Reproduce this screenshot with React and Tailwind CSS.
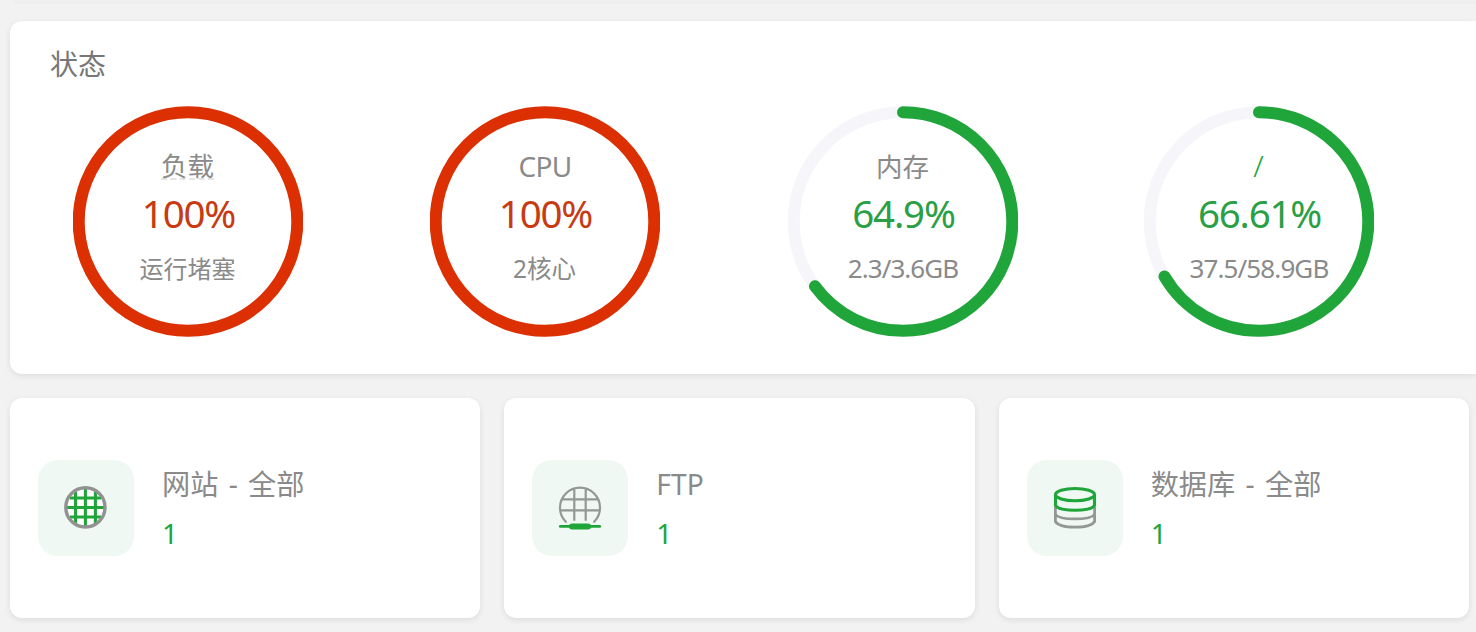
const GAUGES = [
  { id: 'load', label: '负载', value: '100%', percent: 100, note: '运行堵塞', underline: true, labelClass: 'text-[26.5px]', noteClass: 'text-2xl' },
  { id: 'cpu', label: 'CPU', value: '100%', percent: 100, note: '2核心', labelClass: 'text-[28px] tracking-[-0.7px] pl-px', noteClass: 'text-[24.5px]' },
  { id: 'mem', label: '内存', value: '64.9%', percent: 64.9, note: '2.3/3.6GB', className: 'ml-0.5', labelClass: 'text-[26.5px] mt-px', noteClass: 'text-[26px] tracking-[-0.95px] pl-px -mt-px' },
  { id: 'disk', label: '/', value: '66.61%', percent: 66.61, note: '37.5/58.9GB', labelClass: 'text-[30px] font-light text-[#20a53a]', noteClass: 'text-[26px] tracking-[-0.9px] pl-px -mt-px' },
]

const CARDS = [
  { id: 'site', title: '网站 - 全部', count: 1, Icon: SiteIcon },
  { id: 'ftp', title: 'FTP', count: 1, Icon: FtpIcon },
  { id: 'db', title: '数据库 - 全部', count: 1, Icon: DatabaseIcon },
]

function SiteIcon() {
  return (
    <svg width="44" height="44" viewBox="0 0 44 44" fill="none">
      <circle cx="21.4" cy="21.4" r="19.5" fill="#fff" />
      <path d="M11.5 6v31M21.4 3v37M31.4 6v31M6 12h31M3 21.5h37M6 31h31" stroke="#20a53a" strokeWidth="3.1" />
      <circle cx="21.4" cy="21.4" r="19.6" stroke="#929292" strokeWidth="3.4" />
    </svg>
  )
}

function FtpIcon() {
  return (
    <svg width="44" height="44" viewBox="0 0 44 44" fill="none" strokeLinecap="round">
      <path d="M7.8 35.8A20 20 0 1 1 36.2 35.8M16.3 3v31M27.7 3v31M4 13.3h36M2.5 24.3h39" stroke="#929895" strokeWidth="2.2" />
      <path d="M2.3 40.4h39.4" stroke="#20a53a" strokeWidth="2.8" />
      <path d="M14 40.4h16" stroke="#20a53a" strokeWidth="6" />
    </svg>
  )
}

function DatabaseIcon() {
  return (
    <svg width="44" height="44" viewBox="0 0 44 44" fill="none">
      <path d="M2.4 21v14.5C7 43 37 43 41.6 35.5V21M2.4 28.5C7 34.4 37 34.4 41.6 28.5" stroke="#929895" strokeWidth="2.8" />
      <ellipse cx="22" cy="8.6" rx="19.5" ry="6.1" stroke="#20a53a" strokeWidth="3.1" />
      <path d="M2.5 8.6v11C7 25.8 37 25.8 41.5 19.6v-11" stroke="#20a53a" strokeWidth="3.1" />
    </svg>
  )
}

function Gauge({ label, value, percent, note, underline, className = '', labelClass, noteClass }) {
  const full = percent >= 100
  return (
    <div className={`grid h-[231px] w-[230px] place-items-center ${className}`}>
      <svg className="col-start-1 row-start-1" width="230" height="231" viewBox="0 0 230 231" fill="none">
        <circle cx="115" cy="115.5" r="109.3" stroke="#f6f6fa" strokeWidth="12" />
        <circle
          cx="115"
          cy="115.5"
          r="109.3"
          pathLength="100"
          stroke={full ? '#dc2f02' : '#20a53a'}
          strokeWidth="12"
          strokeLinecap="round"
          strokeDasharray={full ? undefined : `${percent} 100`}
          transform="rotate(-90 115 115.5)"
        />
      </svg>
      <div className="col-start-1 row-start-1 grid h-full grid-rows-[32px_48px_32px] justify-items-center whitespace-nowrap pt-11 text-[#8a8a8a]">
        <div className={`leading-8 ${labelClass}`}>
          <span className={underline ? 'inline-block h-[30px] border-b-2 border-dashed border-[#e4e4e4]' : ''}>{label}</span>
        </div>
        <div className={`mt-[7px] pl-0.5 text-[38.5px] leading-12 tracking-[-1.2px] ${full ? 'text-[#c83a12]' : 'text-[#2b9f45]'}`}>{value}</div>
        <div className="mt-[23px] leading-8">
          <div className={`leading-8 ${noteClass}`}>{note}</div>
        </div>
      </div>
    </div>
  )
}

export default function App() {
  return (
    <div className="h-[632px] overflow-hidden bg-[#f2f2f2] pl-2.5 font-['Noto_Sans','Noto_Sans_CJK_SC',sans-serif]">
      <div className="ml-1 h-1 bg-[#efefef]" />
      <section className="mt-[17px] h-[353px] rounded-l-xl bg-white shadow-[0_2px_6px_rgba(0,0,0,0.09)]">
        <h2 className="h-[85px] pl-10 pt-[23px] text-[28px] leading-10 text-[#777]">状态</h2>
        <div className="-ml-px grid grid-cols-[repeat(4,357px)] justify-items-center">
          {GAUGES.map(g => <Gauge key={g.id} {...g} />)}
        </div>
      </section>

      <div className="mt-6 grid grid-cols-3 gap-6 pr-[7px]">
        {CARDS.map(({ id, title, count, Icon }) => (
          <div key={id} className="flex h-[220px] items-center gap-7 rounded-xl bg-white px-7 shadow-[0_2px_6px_rgba(0,0,0,0.09)]">
            <div className="flex size-24 items-center justify-center rounded-[20px] bg-[#eff8f2]">
              <Icon />
            </div>
            <div className="whitespace-nowrap pt-0.5 text-[28px] text-[#8a8a8a]">
              <div className="h-12 text-[28.2px] leading-12 [word-spacing:3px]">{title}</div>
              <div className="h-[50px] leading-[50px] text-[#20a53a]">{count}</div>
            </div>
          </div>
        ))}
      </div>
    </div>
  )
}
